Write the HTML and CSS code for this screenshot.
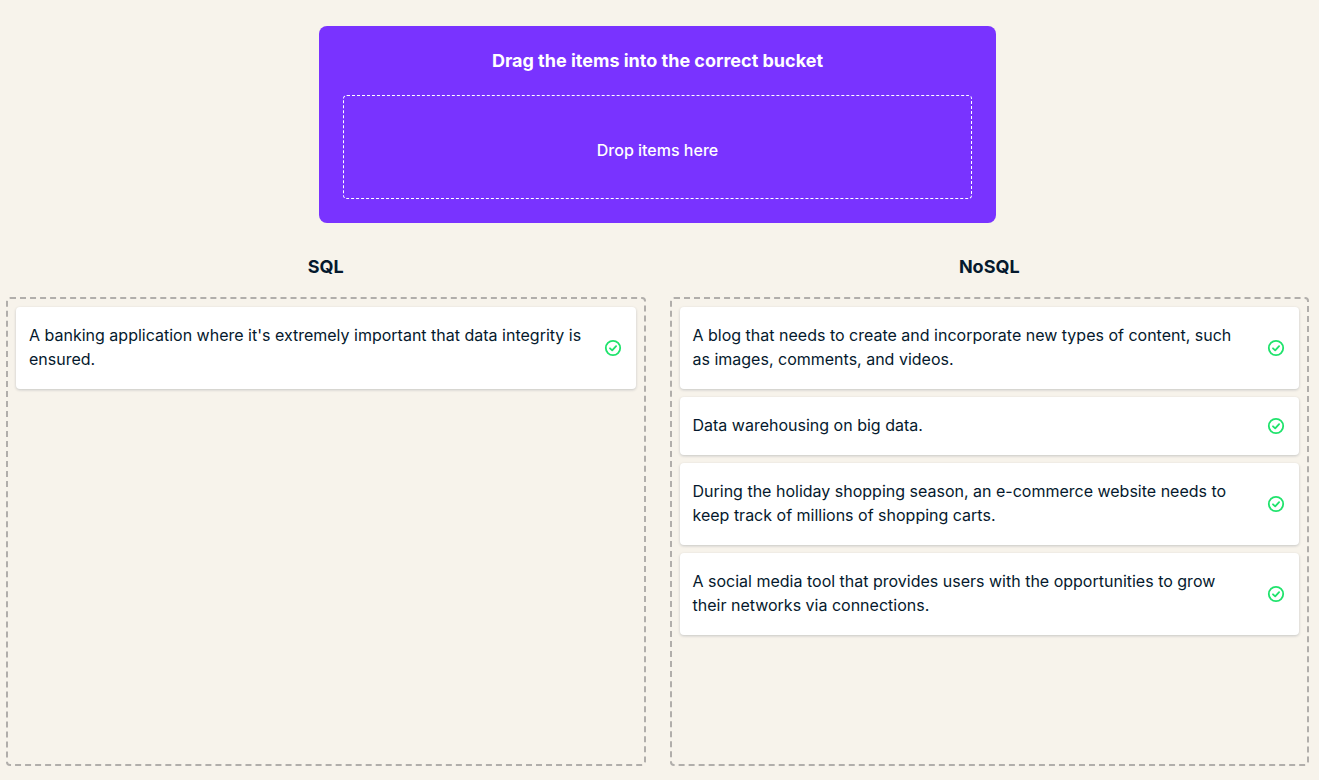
FILE: index.html
```html
<!DOCTYPE html>
<html lang="en">
<head>
<meta charset="utf-8">
<meta name="viewport" content="width=device-width, initial-scale=1">
<title>Drag the items into the correct bucket</title>
<link rel="stylesheet" href="styles.css">
</head>
<body>
<svg class="sprite" aria-hidden="true">
  <symbol id="check" viewBox="0 0 18 18">
    <circle cx="9" cy="9" r="7.2" fill="none" stroke="currentColor" stroke-width="1.8"/>
    <path d="M6 9.3l2.2 2.1 3.9-4.3" fill="none" stroke="currentColor" stroke-width="1.8" stroke-linecap="round" stroke-linejoin="round"/>
  </symbol>
</svg>
<main class="exercise">
  <section class="source">
    <h1 class="source-title">Drag the items into the correct bucket</h1>
    <div class="dropzone">Drop items here</div>
  </section>
  <div class="buckets">
    <section class="bucket">
      <h2 class="bucket-title">SQL</h2>
      <ul class="bucket-list">
        <li class="card"><p class="card-text">A banking application where it's extremely important that data integrity is ensured.</p><svg class="card-icon" role="img" aria-label="Correct"><use href="#check"/></svg></li>
      </ul>
    </section>
    <section class="bucket">
      <h2 class="bucket-title">NoSQL</h2>
      <ul class="bucket-list">
        <li class="card"><p class="card-text">A blog that needs to create and incorporate new types of content, such as images, comments, and videos.</p><svg class="card-icon" role="img" aria-label="Correct"><use href="#check"/></svg></li>
        <li class="card"><p class="card-text">Data warehousing on big data.</p><svg class="card-icon" role="img" aria-label="Correct"><use href="#check"/></svg></li>
        <li class="card"><p class="card-text">During the holiday shopping season, an e-commerce website needs to keep track of millions of shopping carts.</p><svg class="card-icon" role="img" aria-label="Correct"><use href="#check"/></svg></li>
        <li class="card"><p class="card-text">A social media tool that provides users with the opportunities to grow their networks via connections.</p><svg class="card-icon" role="img" aria-label="Correct"><use href="#check"/></svg></li>
      </ul>
    </section>
  </div>
</main>
</body>
</html>
```
FILE: styles.css
```css
* {
  box-sizing: border-box;
}

body {
  margin: 0;
  background: #f7f3eb;
  color: #05192d;
  font: 16px/24px Inter, "Liberation Sans", sans-serif;
}

.sprite {
  position: absolute;
  width: 0;
  height: 0;
}

.exercise {
  display: flex;
  flex-direction: column;
  min-height: 100vh;
  padding: 26px 10px 14px 6px;
}

.source {
  width: 52%;
  margin: 0 auto;
  padding: 24px;
  border-radius: 8px;
  background: #7933ff;
  color: #fff;
  text-align: center;
}

.source-title {
  margin: 0 0 24px;
  font-size: 18px;
  line-height: 21px;
  font-weight: 700;
}

.dropzone {
  padding: 42px 16px 36px;
  border: 1px dashed #fff;
  border-radius: 4px;
  font-weight: 500;
}

.buckets {
  display: grid;
  flex: 1;
  grid-template-columns: 1fr 1fr;
  gap: 24px;
  padding-top: 32px;
}

.bucket {
  display: flex;
  flex-direction: column;
}

.bucket-title {
  margin: 0 0 18px;
  font-size: 18px;
  line-height: 24px;
  font-weight: 700;
  text-align: center;
}

.bucket-list {
  display: flex;
  flex: 1;
  flex-direction: column;
  gap: 8px;
  margin: 0;
  padding: 8px;
  border: 2px dashed #b1aeab;
  border-radius: 4px;
  list-style: none;
}

.card {
  display: flex;
  align-items: center;
  gap: 16px;
  padding: 16px 14px 16px 13px;
  border-radius: 4px;
  background: #fff;
  box-shadow: 0 1px 3px rgba(5, 25, 45, 0.2);
}

.card-text {
  flex: 1;
  margin: 0;
  padding-bottom: 2px;
}

.card-icon {
  flex: none;
  width: 18px;
  height: 18px;
  color: #1fe36c;
}
```
